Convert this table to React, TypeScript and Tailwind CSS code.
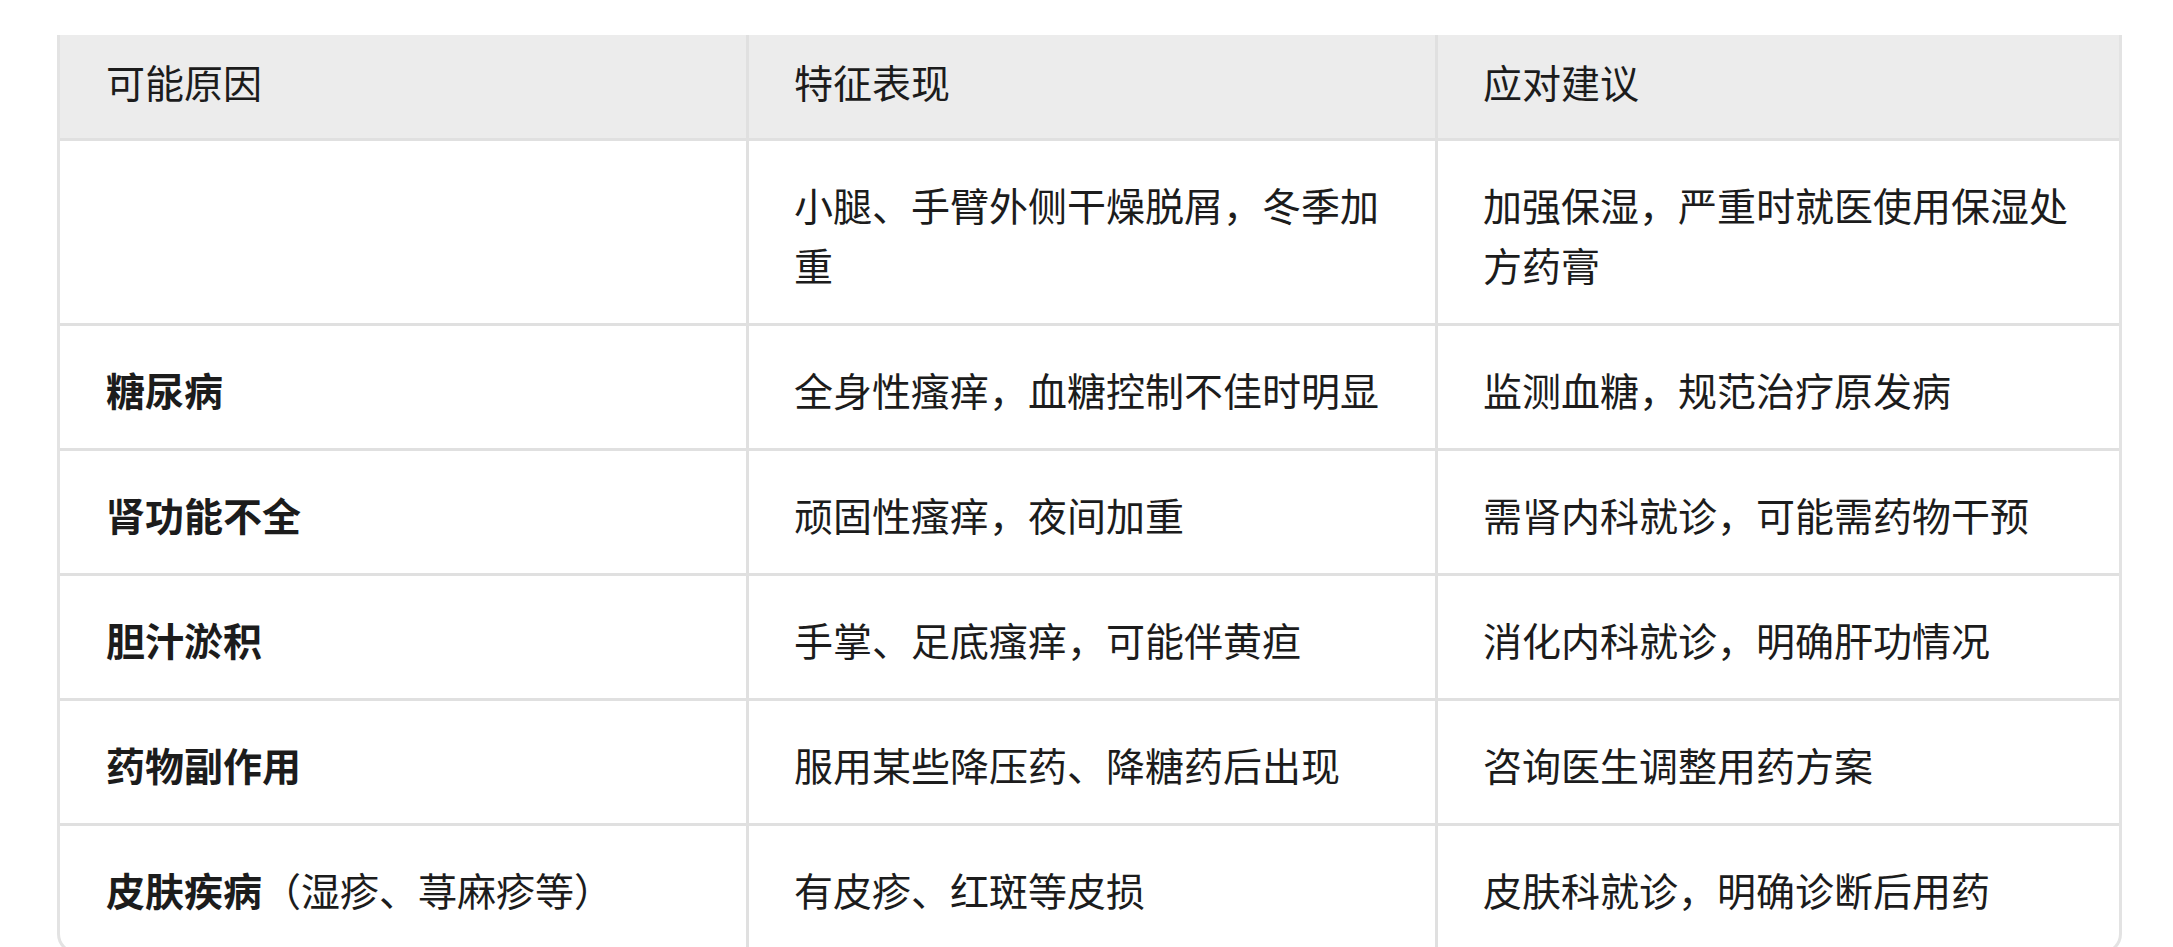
const rows: { cause: string; note?: string; sign: string; advice: string }[] = [
  {
    cause: "",
    sign: "小腿、手臂外侧干燥脱屑，冬季加重",
    advice: "加强保湿，严重时就医使用保湿处方药膏",
  },
  { cause: "糖尿病", sign: "全身性瘙痒，血糖控制不佳时明显", advice: "监测血糖，规范治疗原发病" },
  { cause: "肾功能不全", sign: "顽固性瘙痒，夜间加重", advice: "需肾内科就诊，可能需药物干预" },
  { cause: "胆汁淤积", sign: "手掌、足底瘙痒，可能伴黄疸", advice: "消化内科就诊，明确肝功情况" },
  { cause: "药物副作用", sign: "服用某些降压药、降糖药后出现", advice: "咨询医生调整用药方案" },
  {
    cause: "皮肤疾病",
    note: "（湿疹、荨麻疹等）",
    sign: "有皮疹、红斑等皮损",
    advice: "皮肤科就诊，明确诊断后用药",
  },
]

export default function App() {
  return (
    <div className="min-h-screen bg-white pt-[35px] pl-[57px] font-['Noto_Sans_CJK_SC','Noto_Sans',sans-serif] text-[39px] leading-[60px] text-[#1c1c1c]">
      <div className="w-[2065px] overflow-hidden rounded-b-[20px] border-x-[3px] border-b-[3px] border-[#e3e3e3]">
        <table className="w-full table-fixed border-separate border-spacing-0">
          <colgroup>
            <col className="w-[686px]" />
            <col className="w-[689px]" />
            <col className="w-[684px]" />
          </colgroup>
          <thead>
            <tr className="bg-[#ececec]">
              <th className="border-b-[3px] border-[#e0e0e0] pl-[46px] pr-[46px] pt-[16px] pb-[27px] text-left font-normal">
                可能原因
              </th>
              <th className="border-b-[3px] border-l-[3px] border-[#e0e0e0] pl-[45px] pr-[46px] pt-[16px] pb-[27px] text-left font-normal">
                特征表现
              </th>
              <th className="border-b-[3px] border-l-[3px] border-[#e0e0e0] pl-[45px] pr-[46px] pt-[16px] pb-[27px] text-left font-normal">
                应对建议
              </th>
            </tr>
          </thead>
          <tbody>
            {rows.map((r, i) => (
              <tr key={i}>
                <td className="border-b-[3px] border-[#e0e0e0] pl-[46px] pr-[20px] pt-[33px] pb-[29px] align-top">
                  <span className="font-bold">{r.cause}</span>
                  {r.note && <span>{r.note}</span>}
                </td>
                <td className="border-b-[3px] border-l-[3px] border-[#e0e0e0] pl-[45px] pr-[46px] pt-[33px] pb-[29px] align-top">
                  {r.sign}
                </td>
                <td className="border-b-[3px] border-l-[3px] border-[#e0e0e0] pl-[45px] pr-[46px] pt-[33px] pb-[29px] align-top">
                  {r.advice}
                </td>
              </tr>
            ))}
          </tbody>
        </table>
      </div>
    </div>
  )
}
